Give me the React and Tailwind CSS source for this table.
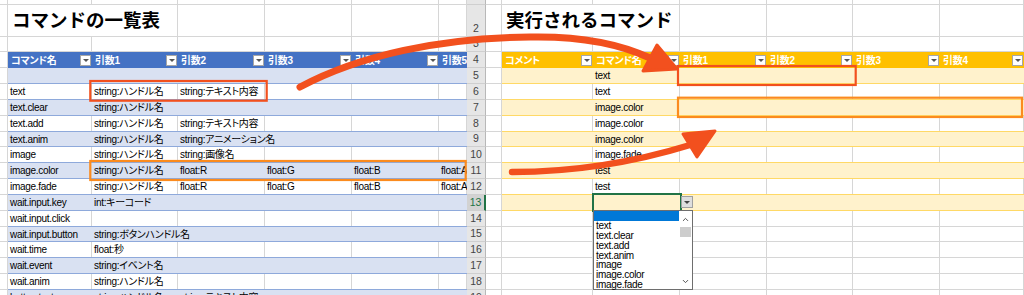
import { ChevronUp, ChevronDown } from 'lucide-react';

const CELL_FONT = "font-['Liberation_Sans','Noto_Sans_CJK_JP',sans-serif] text-[10px] tracking-[-0.3px] [font-feature-settings:'palt']";
const TITLE_FONT = "font-['Noto_Sans_CJK_JP',sans-serif] text-[18.5px] font-bold tracking-normal [font-feature-settings:normal]";

const ROW_H = ['h-[5px]', 'h-[31.5px]', 'h-[15.8px]', 'h-[16px]', ...Array(15).fill('h-[15.83px]')];

const LEFT_W = ['w-[8px]', 'w-[84px]', 'w-[86px]', 'w-[87px]', 'w-[87px]', 'w-[87px]', 'w-[28px]'];
const RIGHT_W = ['w-[16px]', 'w-[91px]', 'w-[87px]', 'w-[87px]', 'w-[86px]', 'w-[87px]', 'w-[84px]'];

const LEFT_HEAD = ['コマンド名', '引数1', '引数2', '引数3', '引数4', '引数5'];
const RIGHT_HEAD = ['コメント', 'コマンド名', '引数1', '引数2', '引数3', '引数4'];

// rows 5..19, columns B..G
const LEFT_DATA = [
  [],
  ['text', 'string:ハンドル名', 'string:テキスト内容'],
  ['text.clear', 'string:ハンドル名'],
  ['text.add', 'string:ハンドル名', 'string:テキスト内容'],
  ['text.anim', 'string:ハンドル名', 'string:アニメーション名'],
  ['image', 'string:ハンドル名', 'string:画像名'],
  ['image.color', 'string:ハンドル名', 'float:R', 'float:G', 'float:B', 'float:A'],
  ['image.fade', 'string:ハンドル名', 'float:R', 'float:G', 'float:B', 'float:A'],
  ['wait.input.key', 'int:キーコード'],
  ['wait.input.click'],
  ['wait.input.button', 'string:ボタンハンドル名'],
  ['wait.time', 'float:秒'],
  ['wait.event', 'string:イベント名'],
  ['wait.anim', 'string:ハンドル名'],
  ['button.text', 'string:ハンドル名', 'string:テキスト内容'],
];

// rows 5..13, column C
const RIGHT_CMDS = ['text', 'text', 'image.color', 'image.color', 'image.color', 'image.fade', 'test', 'test', ''];

const LIST_ITEMS = ['text', 'text.clear', 'text.add', 'text.anim', 'image', 'image.color', 'image.fade'];

function Cell({ w, right = true, bottom = true, clip = false, children }) {
  return (
    <div
      className={`flex shrink-0 items-center whitespace-nowrap pl-[2px] border-[#d6d6d6] ${w} ${right ? 'border-r' : ''} ${bottom ? 'border-b' : ''} ${clip ? 'overflow-hidden' : ''}`}
    >
      {children}
    </div>
  );
}

function FilterBtn() {
  return (
    <span className="flex h-[11px] w-[11px] shrink-0 items-center justify-center border border-[#a6a6a6] bg-white">
      <span className="mt-[1px] h-0 w-0 border-x-[3px] border-t-[3px] border-x-transparent border-t-[#555]" />
    </span>
  );
}

function HeadCell({ w, label }) {
  return (
    <div className={`flex shrink-0 items-center justify-between pl-[3px] pr-[1px] ${w}`}>
      <span className="whitespace-nowrap font-bold text-white">{label}</span>
      <FilterBtn />
    </div>
  );
}

function Title({ children }) {
  return <span className={`pl-[2px] ${TITLE_FONT}`}>{children}</span>;
}

function LeftSheet() {
  return (
    <div className="flex w-[467px] shrink-0 flex-col overflow-hidden">
      {ROW_H.map((h, i) => {
        const r = i + 1;
        const band = r % 2 === 1;
        const data = r >= 5 ? LEFT_DATA[r - 5] : [];
        return (
          <div key={r} className={`flex shrink-0 ${h}`}>
            <Cell w={LEFT_W[0]} />
            {r < 4 &&
              LEFT_W.slice(1).map((w, c) => (
                <Cell key={c} w={w} right={!(r === 2 && c === 0)}>
                  {r === 2 && c === 0 && <Title>コマンドの一覧表</Title>}
                </Cell>
              ))}
            {r === 4 && (
              <div className="flex bg-[#4472c4]">
                {LEFT_W.slice(1).map((w, c) => (
                  <HeadCell key={c} w={w} label={LEFT_HEAD[c]} />
                ))}
              </div>
            )}
            {r >= 5 && (
              <div className={`flex border-b border-[#8ea9db] ${band ? 'bg-[#d9e1f2]' : 'bg-white'}`}>
                {LEFT_W.slice(1).map((w, c) => (
                  <Cell key={c} w={w} right={!band} bottom={false} clip={!!data[c + 1]}>
                    {data[c]}
                  </Cell>
                ))}
              </div>
            )}
          </div>
        );
      })}
    </div>
  );
}

function RowHead({ r, h }) {
  const sel = r === 13;
  return (
    <div
      className={`flex w-[19px] shrink-0 items-end justify-center overflow-hidden border-b border-[#cfcfcf] pb-[2px] font-['Liberation_Sans',sans-serif] text-[10.5px] leading-[12px] tracking-normal ${h} ${
        sel ? 'border-r-2 border-r-[#217346] bg-[#d2d2d2] text-[#217346]' : 'border-r border-r-[#b8b8b8] bg-[#e6e6e6] text-[#444]'
      }`}
    >
      {r}
    </div>
  );
}

function RightSheet() {
  return (
    <div className="flex w-[557px] shrink-0 flex-col overflow-hidden">
      {ROW_H.map((h, i) => {
        const r = i + 1;
        const inTable = r >= 5 && r <= 13;
        const band = r % 2 === 1;
        return (
          <div key={r} className={`flex shrink-0 ${h}`}>
            <RowHead r={r} h={h} />
            <Cell w={RIGHT_W[0]} />
            {(r < 4 || r > 13) &&
              RIGHT_W.slice(1).map((w, c) => (
                <Cell key={c} w={w} right={!(r === 2 && c === 0)}>
                  {r === 2 && c === 0 && <Title>実行されるコマンド</Title>}
                </Cell>
              ))}
            {r === 4 && (
              <div className="flex bg-[#ffc000]">
                {RIGHT_W.slice(1).map((w, c) => (
                  <HeadCell key={c} w={w} label={RIGHT_HEAD[c]} />
                ))}
              </div>
            )}
            {inTable && (
              <div className={`flex border-b border-[#ffd966] ${band ? 'bg-[#fff2cc]' : 'bg-white'}`}>
                {RIGHT_W.slice(1).map((w, c) => (
                  <Cell key={c} w={w} right={!band} bottom={false}>
                    {c === 1 ? RIGHT_CMDS[r - 5] : null}
                  </Cell>
                ))}
              </div>
            )}
          </div>
        );
      })}
    </div>
  );
}

function Dropdown() {
  return (
    <>
      <div className="absolute left-[592px] top-[193px] h-[18.5px] w-[89.5px] border-2 border-[#217346]" />
      <div className="absolute left-[681px] top-[196px] flex h-[12px] w-[12px] items-center justify-center border border-[#a0a0a0] bg-[#dedede]">
        <span className="mt-[1px] h-0 w-0 border-x-[3px] border-t-[3px] border-x-transparent border-t-[#444]" />
      </div>
      <div className="absolute left-[593px] top-[210px] flex h-[80px] w-[100px] border border-[#6e6e6e] bg-white">
        <div className="flex flex-1 flex-col leading-[9.85px]">
          <div className="h-[10px] shrink-0 bg-[#0078d7]" />
          {LIST_ITEMS.map((t) => (
            <div key={t} className="h-[9.85px] shrink-0 whitespace-nowrap pl-[2px]">
              {t}
            </div>
          ))}
        </div>
        <div className="flex w-[13px] shrink-0 flex-col items-center">
          <ChevronUp size={9} strokeWidth={2.6} className="mt-[4px] text-[#505050]" />
          <div className="mt-[3px] h-[10px] w-[11px] bg-[#cdcdcd]" />
          <div className="flex-1" />
          <ChevronDown size={9} strokeWidth={2.6} className="mb-[3px] text-[#505050]" />
        </div>
      </div>
    </>
  );
}

function Annotations() {
  const red = '#f2501e';
  const orange = '#fb8b1e';
  return (
    <svg className="pointer-events-none absolute left-0 top-0" width="1024" height="295" viewBox="0 0 1024 295">
      <rect x="90.3" y="81" width="176.4" height="19.7" fill="none" stroke={red} strokeWidth="2.2" />
      <rect x="90.3" y="161" width="375.4" height="19" fill="none" stroke={orange} strokeWidth="2.2" />
      <rect x="678" y="66" width="177.7" height="19" fill="none" stroke={red} strokeWidth="2.2" />
      <rect x="678" y="97.7" width="344" height="19.3" fill="none" stroke={orange} strokeWidth="2.2" />

      <path d="M300 87 C 360 55 440 38 530 37 C 580 36 620 44 650 58" fill="none" stroke={red} strokeWidth="7" strokeLinecap="round" />
      <polygon points="643,71 657,45 677,69" fill={red} stroke={red} strokeWidth="3" strokeLinejoin="round" />

      <path d="M512 172 C 575 172 635 162 690 145" fill="none" stroke={red} strokeWidth="6.5" strokeLinecap="round" />
      <polygon points="683,134 697,157 715,131" fill={red} stroke={red} strokeWidth="3" strokeLinejoin="round" />
    </svg>
  );
}

export default function App() {
  return (
    <div className={`relative flex h-[295px] w-[1024px] overflow-hidden bg-white text-black ${CELL_FONT}`}>
      <LeftSheet />
      <RightSheet />
      <Dropdown />
      <Annotations />
    </div>
  );
}
